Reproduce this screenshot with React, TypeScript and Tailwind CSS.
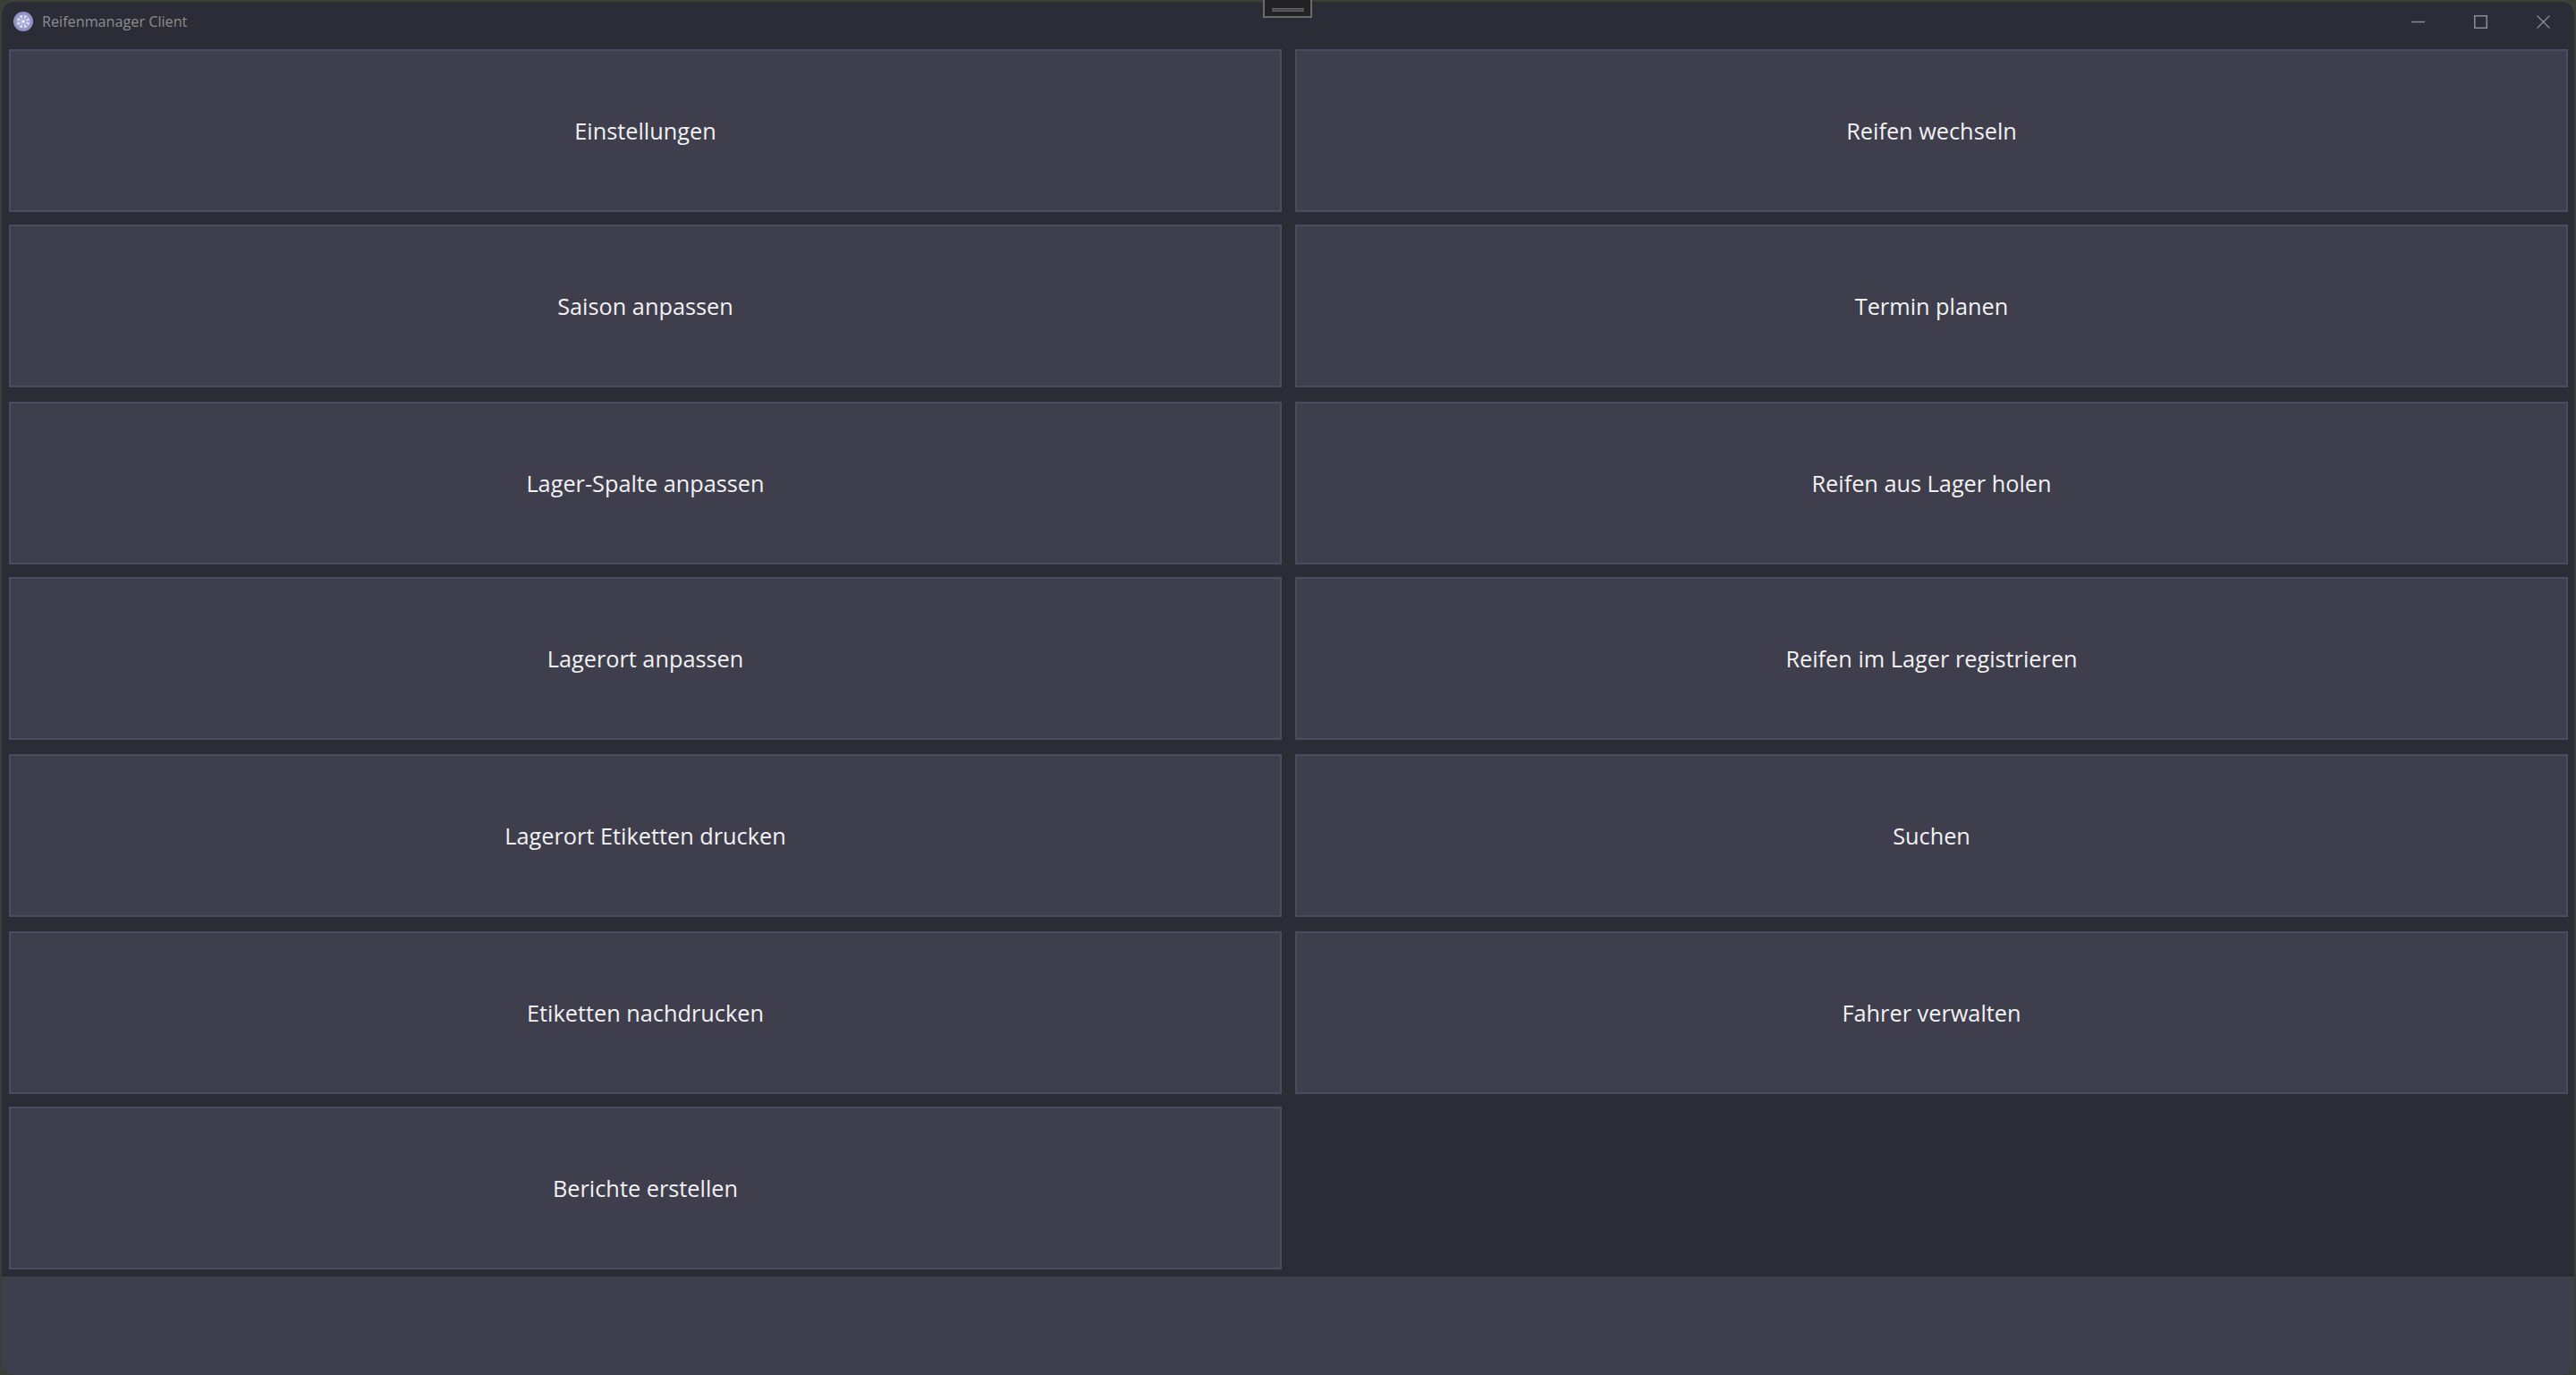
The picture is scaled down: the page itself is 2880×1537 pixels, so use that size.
const leftButtons = [
  'Einstellungen',
  'Saison anpassen',
  'Lager-Spalte anpassen',
  'Lagerort anpassen',
  'Lagerort Etiketten drucken',
  'Etiketten nachdrucken',
  'Berichte erstellen',
];

const rightButtons = [
  'Reifen wechseln',
  'Termin planen',
  'Reifen aus Lager holen',
  'Reifen im Lager registrieren',
  'Suchen',
  'Fahrer verwalten',
];

// row gaps in the app are rounded unevenly, one class per row
const rowMargins = ['', 'mt-[14px]', 'mt-[16px]', 'mt-[14px]', 'mt-[16px]', 'mt-[16px]', 'mt-[14px]'];

const MenuButton = ({ label, className }: { label: string; className: string }) => (
  <button className={`h-[182px] w-full shrink-0 border-2 border-[#4c4b61] bg-[#3f3e4c] pt-[2px] text-[25.3px] text-[#f1f1f3] ${className}`}>
    {label}
  </button>
);

// wheel icon next to the window title
const WheelIcon = () => (
  <svg width="22" height="22" viewBox="0 0 22 22">
    <circle cx="11" cy="11" r="11" fill="#9092c8" />
    <circle cx="11" cy="11" r="7.5" fill="#d5d6ec" />
    <path d="M11 3.5v15M3.5 11h15M5.7 5.7l10.6 10.6M16.3 5.7L5.7 16.3" stroke="#8486bd" strokeWidth="1.2" />
    <circle cx="11" cy="11" r="2" fill="#e6e7f5" />
  </svg>
);

const MinimizeIcon = () => (
  <svg width="15" height="15" viewBox="0 0 15 15" className="text-[#8c8c90]">
    <path d="M0 7.5h15" stroke="currentColor" strokeWidth="1.5" />
  </svg>
);

const MaximizeIcon = () => (
  <svg width="15" height="15" viewBox="0 0 15 15" className="text-[#8c8c90]">
    <rect x="0.75" y="0.75" width="13.5" height="13.5" fill="none" stroke="currentColor" strokeWidth="1.5" />
  </svg>
);

const CloseIcon = () => (
  <svg width="15" height="15" viewBox="0 0 15 15" className="text-[#8c8c90]">
    <path d="M0.5 0.5l14 14M14.5 0.5l-14 14" stroke="currentColor" strokeWidth="1.3" />
  </svg>
);

export default function App() {
  return (
    <div
      className="relative h-[1537px] w-full overflow-hidden bg-[#3c3e38] px-[2px] pt-[2px]"
      style={{ fontFamily: '"Open Sans", "Noto Sans", sans-serif' }}
    >
      {/* drag handle at top of screen */}
      <div className="absolute left-[1412px] top-0 z-10 flex h-[20px] w-[55px] items-center justify-center border-x-2 border-b-2 border-[#6b6b6b] bg-[#222225] pt-[4px]">
        <div className="h-[4px] w-[36px] border-y border-[#666668] bg-[#4c4c4e]" />
      </div>

      <div className="flex h-[1535px] flex-col overflow-hidden rounded-[14px] bg-[#2c2c36]">
        {/* title bar */}
        <div className="flex h-[44px] shrink-0 items-center pl-[13px]">
          <WheelIcon />
          <span className="ml-[10px] text-[16.2px] text-[#8e8e92]">Reifenmanager Client</span>
          <div className="ml-auto flex items-center gap-[55px] pr-[27px]">
            <MinimizeIcon />
            <MaximizeIcon />
            <CloseIcon />
          </div>
        </div>

        {/* menu grid */}
        <div className="mt-[9px] grid h-[1372px] shrink-0 grid-cols-2 gap-x-[15px] pl-[8px] pr-[7px]">
          <div className="flex flex-col">
            {leftButtons.map((label, i) => (
              <MenuButton key={label} label={label} className={rowMargins[i]} />
            ))}
          </div>
          <div className="flex flex-col">
            {rightButtons.map((label, i) => (
              <MenuButton key={label} label={label} className={rowMargins[i]} />
            ))}
          </div>
        </div>

        {/* status bar */}
        <div className="flex-1 bg-[#3f3e4c]" />
      </div>
    </div>
  );
}
